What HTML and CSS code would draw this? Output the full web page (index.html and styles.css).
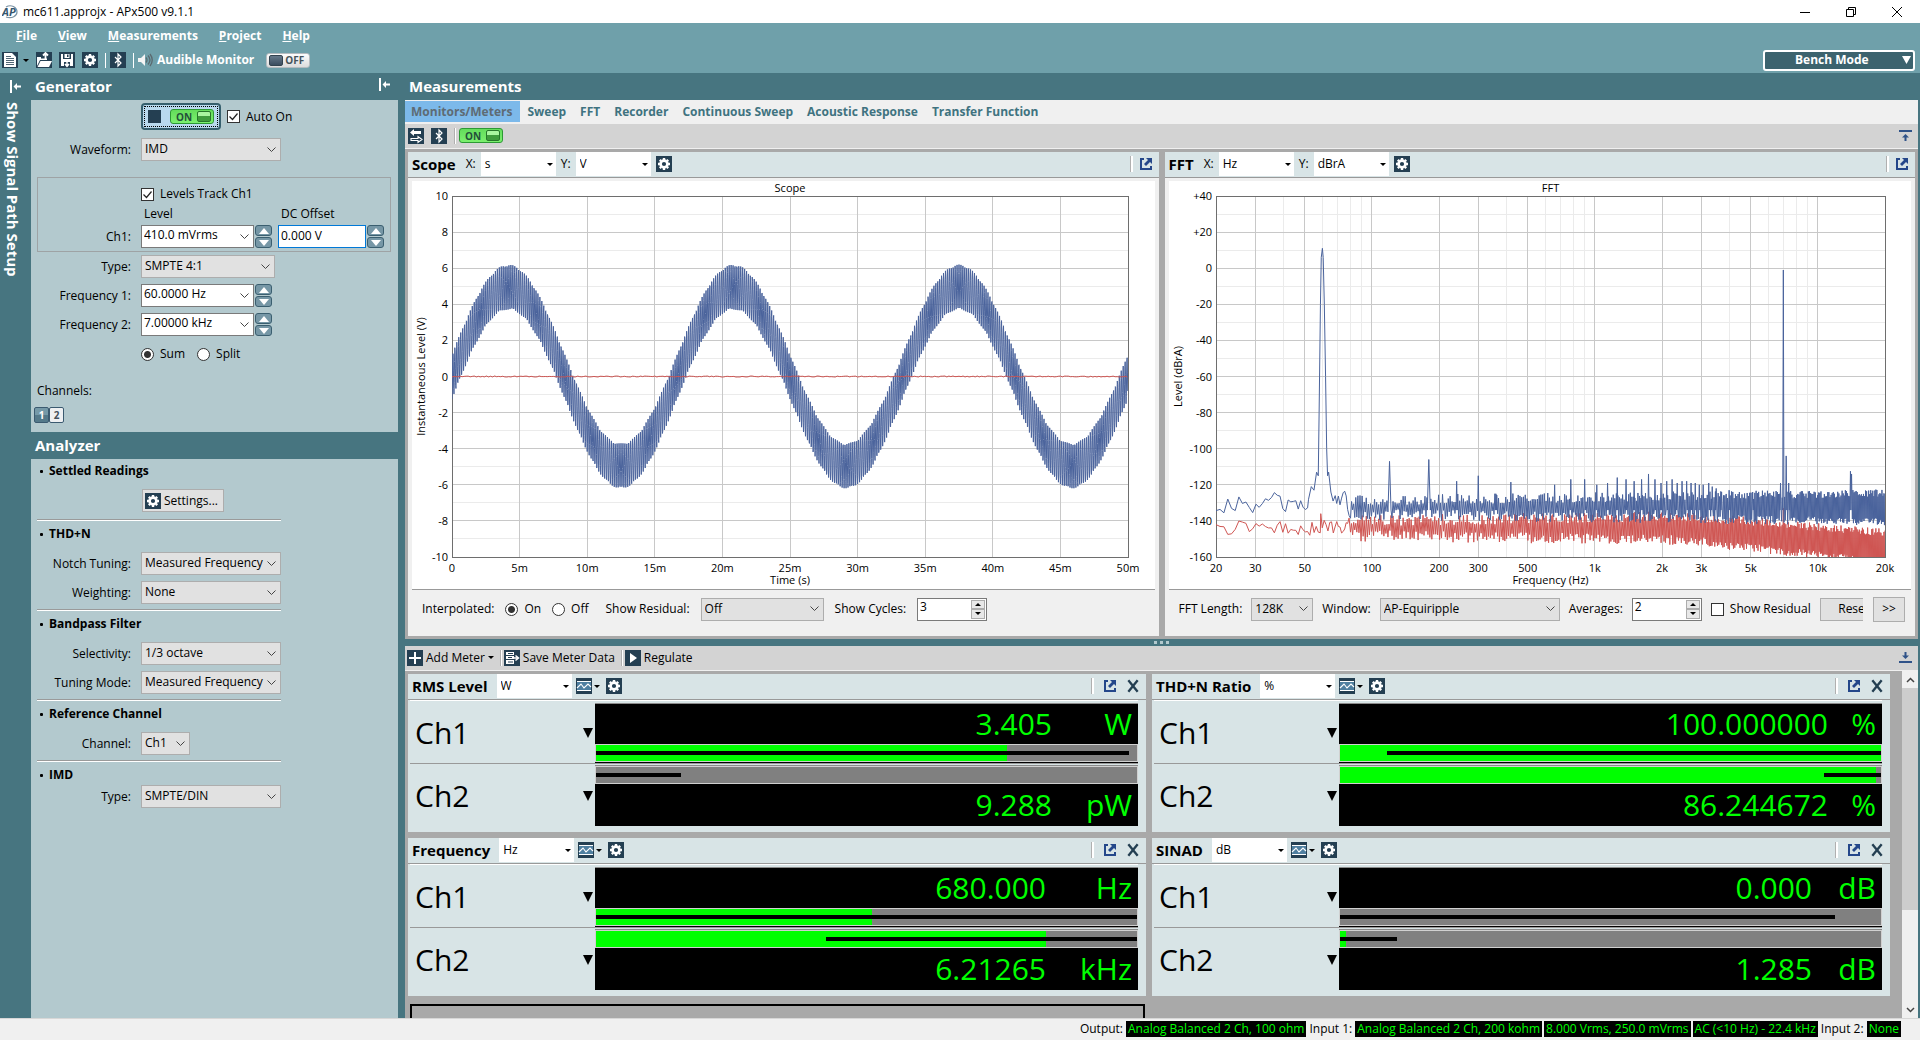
FILE: index.html
```
<!DOCTYPE html>
<html lang="en">
<head>
  <meta charset="UTF-8" />
  <meta name="viewport" content="width=device-width, initial-scale=1" />
  <title>mc611.approjx - APx500 v9.1.1</title>
  <link rel="stylesheet" href="styles.css">
</head>
<body>

<!-- shared icons -->
<svg class="defs" width="0" height="0" aria-hidden="true">
  <symbol id="i-gear" viewBox="0 0 16 16">
    <rect width="16" height="16" fill="#243f52"/>
    <circle cx="8" cy="8" r="3.4" fill="none" stroke="#fff" stroke-width="2.6"/>
    <path d="M8 2v2M8 12v2M2 8h2M12 8h2M3.8 3.8l1.3 1.3M10.9 10.9l1.3 1.3M3.8 12.2l1.3-1.3M10.9 5.1l1.3-1.3" stroke="#fff" stroke-width="2.4"/>
  </symbol>
  <symbol id="i-bt" viewBox="0 0 16 16">
    <rect width="16" height="16" fill="#243f52"/>
    <path d="M5 5l6 6-3 3V2l3 3-6 6" fill="none" stroke="#fff" stroke-width="1.2"/>
  </symbol>
  <symbol id="i-popout" viewBox="0 0 14 14">
    <path d="M5 2H2v10h10V9" fill="none" stroke="#24478a" stroke-width="2"/>
    <path d="M7 1h6v6l-2-2-4 4-2-2 4-4z" fill="#24478a"/>
  </symbol>
  <symbol id="i-close" viewBox="0 0 12 12">
    <path d="M2 1l8 10M10 1L2 11" stroke="#243f52" stroke-width="2"/>
  </symbol>
  <symbol id="i-graph" viewBox="0 0 16 16">
    <rect width="16" height="16" fill="#243f52"/>
    <path d="M1 3.5h14M1 12.5h14" stroke="#fff" stroke-width="1"/>
    <rect x="1" y="4" width="14" height="8" fill="#4f7fa0"/>
    <path d="M1 10l4-4 3 4 4-4 3 3" fill="none" stroke="#fff" stroke-width="1.1"/>
  </symbol>
  <symbol id="i-pin" viewBox="0 0 11 13">
    <path d="M1 0v13" stroke="#fff" stroke-width="2"/>
    <path d="M3.5 6.500L7 3v2.500h4v2H7V10z" fill="#fff"/>
  </symbol>
</svg>

<header class="titlebar">
  <svg width="16" height="16" viewBox="0 0 16 16">
    <path d="M4 3C9 0 15 3 15 8c0 4-5 7-11 5" fill="none" stroke="#7c93a3" stroke-width="1.200"/>
    <text class="logo-text" x="0" y="12">AP</text>
  </svg>
  <span class="window-title">mc611.approjx - APx500 v9.1.1</span>
  <div class="window-buttons">
    <button type="button" aria-label="Minimize"><svg width="10" height="10" viewBox="0 0 10 10"><path d="M0 5.500h10" stroke="#000"/></svg></button>
    <button type="button" aria-label="Restore"><svg width="10" height="10" viewBox="0 0 10 10"><path d="M.5 2.500h7v7h-7zM2.500 2.500v-2h7v7h-2" fill="none" stroke="#000"/></svg></button>
    <button type="button" aria-label="Close"><svg width="10" height="10" viewBox="0 0 10 10"><path d="M0 0l10 10M10 0L0 10" stroke="#000"/></svg></button>
  </div>
</header>

<div class="topbar">
  <nav class="menu">
    <a href="#"><u>F</u>ile</a>
    <a href="#"><u>V</u>iew</a>
    <a href="#"><u>M</u>easurements</a>
    <a href="#"><u>P</u>roject</a>
    <a href="#"><u>H</u>elp</a>
  </nav>
  <div class="toolbar">
    <button type="button" class="icon-btn new-btn" aria-label="New">
      <svg width="16" height="16" viewBox="0 0 16 16"><rect width="16" height="16" fill="#243f52"/><path d="M2 1h8l4 4v10H2z" fill="#fff"/><path d="M4 4.500h5M4 6.500h8M4 8.500h8M4 10.500h8M4 12.500h8" stroke="#243f52" stroke-width=".8"/></svg>
      <span class="caret"></span>
    </button>
    <button type="button" class="icon-btn" aria-label="Open">
      <svg width="16" height="16" viewBox="0 0 16 16"><rect width="16" height="16" fill="#243f52"/><path d="M1 5h4v1.500h6V8H4l-3 6z" fill="#fff"/><path d="M4.500 9H16l-3 6H1.500z" fill="#fff"/><path d="M9.500 8V1M7 3.500L9.500 1 12 3.500" fill="none" stroke="#fff" stroke-width="1.800"/></svg>
    </button>
    <button type="button" class="icon-btn" aria-label="Save">
      <svg width="16" height="16" viewBox="0 0 16 16"><rect width="16" height="16" fill="#243f52"/><path d="M2 2h2v5h8V2h2v12h-3v-4H5v4H2z" fill="#fff"/><path d="M5.500 2h5v4h-5z" fill="#fff"/><path d="M8 2.500h1.500V5H8z" fill="#243f52"/><path d="M8 9v5M6 12l2 2.300 2-2.300" fill="none" stroke="#fff" stroke-width="1.500"/></svg>
    </button>
    <button type="button" class="icon-btn" aria-label="Settings"><svg width="16" height="16"><use href="#i-gear"/></svg></button>
    <span class="sep"></span>
    <button type="button" class="icon-btn" aria-label="Bluetooth"><svg width="16" height="16"><use href="#i-bt"/></svg></button>
    <span class="sep"></span>
    <span class="monitor">
      <svg width="15" height="14" viewBox="0 0 15 14"><path d="M0 5h3l4-4v12L3 9H0z" fill="#f4f4f4"/><path d="M8 4.500q2 2.500 0 5M10 2.500q4 4.500 0 9M12 1q4.500 6 0 12" fill="none" stroke="#5b6a70" stroke-width="1.300"/></svg>
      Audible Monitor
    </span>
    <button type="button" class="toggle off"><i></i>OFF</button>
    <button type="button" class="bench">Bench Mode <svg width="9" height="8" viewBox="0 0 9 8"><path d="M0 0h9L4.500 8z" fill="#fff"/></svg></button>
  </div>
</div>

<main class="workspace">
  <aside class="path-strip">
    <svg width="11" height="13"><use href="#i-pin"/></svg>
    <span>Show Signal Path Setup</span>
  </aside>

  <div class="side">
    <h2 class="bar-title">Generator <svg width="11" height="13"><use href="#i-pin"/></svg></h2>
    <form class="panel generator">
      <div class="row on-row">
        <button type="button" class="on-button"><i class="stop"></i><span class="toggle on">ON<i></i></span></button>
        <label><input type="checkbox" checked> Auto On</label>
      </div>
      <div class="row wave-row">
        <label for="waveform">Waveform:</label>
        <select id="waveform" class="w140"><option>IMD</option></select>
      </div>
      <fieldset class="levels">
        <label class="track"><input type="checkbox" checked> Levels Track Ch1</label>
        <div class="level-heads"><span>Level</span><span>DC Offset</span></div>
        <div class="row">
          <label for="ch1">Ch1:</label>
          <div class="combo"><input id="ch1" type="text" value="410.0 mVrms"><button type="button" aria-label="Choose level"></button></div>
          <div class="spin"><button type="button" aria-label="Up"></button><button type="button" aria-label="Down"></button></div>
          <input class="dc" type="text" value="0.000 V" aria-label="DC Offset">
          <div class="spin"><button type="button" aria-label="Up"></button><button type="button" aria-label="Down"></button></div>
        </div>
      </fieldset>
      <div class="fields">
        <div class="row">
          <label for="gtype">Type:</label>
          <select id="gtype" class="w134"><option>SMPTE 4:1</option></select>
        </div>
        <div class="row">
          <label for="f1">Frequency 1:</label>
          <div class="combo"><input id="f1" type="text" value="60.0000 Hz"><button type="button" aria-label="Choose frequency 1"></button></div>
          <div class="spin"><button type="button" aria-label="Up"></button><button type="button" aria-label="Down"></button></div>
        </div>
        <div class="row">
          <label for="f2">Frequency 2:</label>
          <div class="combo"><input id="f2" type="text" value="7.00000 kHz"><button type="button" aria-label="Choose frequency 2"></button></div>
          <div class="spin"><button type="button" aria-label="Up"></button><button type="button" aria-label="Down"></button></div>
        </div>
      </div>
      <div class="radios">
        <label><input type="radio" name="mode" checked> Sum</label>
        <label><input type="radio" name="mode"> Split</label>
      </div>
      <div class="channels-label">Channels:</div>
      <div class="channels">
        <button type="button" class="active">1</button><button type="button">2</button>
      </div>
    </form>

    <h2 class="bar-title">Analyzer</h2>
    <form class="panel analyzer">
      <section>
        <h3>Settled Readings</h3>
        <button type="button" class="settings"><svg width="16" height="16"><use href="#i-gear"/></svg> Settings...</button>
      </section>
      <section>
        <h3>THD+N</h3>
        <div class="row"><label for="notch">Notch Tuning:</label><select id="notch" class="w140"><option>Measured Frequency</option></select></div>
        <div class="row"><label for="weight">Weighting:</label><select id="weight" class="w140"><option>None</option></select></div>
      </section>
      <section>
        <h3>Bandpass Filter</h3>
        <div class="row"><label for="select">Selectivity:</label><select id="select" class="w140"><option>1/3 octave</option></select></div>
        <div class="row"><label for="tuning">Tuning Mode:</label><select id="tuning" class="w140"><option>Measured Frequency</option></select></div>
      </section>
      <section>
        <h3>Reference Channel</h3>
        <div class="row"><label for="refch">Channel:</label><select id="refch" class="w49"><option>Ch1</option></select></div>
      </section>
      <section class="tight">
        <h3>IMD</h3>
        <div class="row"><label for="imd">Type:</label><select id="imd" class="w140"><option>SMPTE/DIN</option></select></div>
      </section>
    </form>
  </div>

  <div class="content">
    <h2 class="bar-title">Measurements</h2>
    <nav class="tabs">
      <a href="#" class="active">Monitors/Meters</a>
      <a href="#">Sweep</a>
      <a href="#">FFT</a>
      <a href="#">Recorder</a>
      <a href="#">Continuous Sweep</a>
      <a href="#">Acoustic Response</a>
      <a href="#">Transfer Function</a>
    </nav>
    <div class="strip">
      <button type="button" class="icon-btn" aria-label="Swap"><svg width="16" height="16" viewBox="0 0 16 16"><rect width="16" height="16" fill="#243f52"/><path d="M2 4.500L6 1v2h7v3H6v2z" fill="#fff"/><path d="M14 11.500l-4-3v2H3v2h7v2z" fill="none" stroke="#fff" stroke-width="1.100"/></svg></button>
      <button type="button" class="icon-btn" aria-label="Bluetooth"><svg width="16" height="16"><use href="#i-bt"/></svg></button>
      <span class="sep"></span>
      <button type="button" class="toggle on">ON<i></i></button>
      <button type="button" class="icon-btn end" aria-label="Collapse up"><svg width="13" height="12" viewBox="0 0 13 12"><path d="M0 1h13M6.500 11V6" stroke="#2f5288" stroke-width="2"/><path d="M3 7.500L6.500 4 10 7.500z" fill="#2f5288"/></svg></button>
    </div>

    <div class="monitors">
      <section class="monitor-panel">
        <div class="head">
          <h3>Scope</h3>
          <label for="sx">X:</label><select id="sx"><option>s</option></select>
          <label for="sy">Y:</label><select id="sy"><option>V</option></select>
          <button type="button" class="icon-btn" aria-label="Scope settings"><svg width="16" height="16"><use href="#i-gear"/></svg></button>
          <div class="head-end"><button type="button" class="icon-btn" aria-label="Undock"><svg width="14" height="14"><use href="#i-popout"/></svg></button></div>
        </div>
        <div class="chart" id="scope"></div>
        <div class="controls scope-controls">
          <span>Interpolated:</span>
          <label><input type="radio" name="interp" checked> On</label>
          <label><input type="radio" name="interp"> Off</label>
          <label class="resid-label" for="resid">Show Residual:</label><select id="resid" class="w123"><option>Off</option></select>
          <label for="cycles">Show Cycles:</label>
          <div class="number"><input id="cycles" type="text" value="3"><span><button type="button" aria-label="Up"></button><button type="button" aria-label="Down"></button></span></div>
        </div>
      </section>

      <section class="monitor-panel">
        <div class="head">
          <h3>FFT</h3>
          <label for="fx">X:</label><select id="fx"><option>Hz</option></select>
          <label for="fy">Y:</label><select id="fy"><option>dBrA</option></select>
          <button type="button" class="icon-btn" aria-label="FFT settings"><svg width="16" height="16"><use href="#i-gear"/></svg></button>
          <div class="head-end"><button type="button" class="icon-btn" aria-label="Undock"><svg width="14" height="14"><use href="#i-popout"/></svg></button></div>
        </div>
        <div class="chart" id="fft"></div>
        <div class="controls fft-controls">
          <label for="len">FFT Length:</label><select id="len" class="w62"><option>128K</option></select>
          <label for="win">Window:</label><select id="win" class="w180"><option>AP-Equiripple</option></select>
          <label for="avg">Averages:</label>
          <div class="number"><input id="avg" type="text" value="2"><span><button type="button" aria-label="Up"></button><button type="button" aria-label="Down"></button></span></div>
          <label class="residual"><input type="checkbox"> Show Residual</label>
          <div class="clip"><button type="button">Reset</button></div>
          <button type="button" class="more">&gt;&gt;</button>
        </div>
      </section>
    </div>

    <div class="splitter"><i></i><i></i><i></i></div>

    <div class="strip meter-strip">
      <button type="button" class="text-btn"><svg width="16" height="16" viewBox="0 0 16 16"><rect width="16" height="16" fill="#243f52"/><path d="M8 2v12M2 8h12" stroke="#fff" stroke-width="2"/></svg> Add Meter <span class="caret"></span></button>
      <span class="sep"></span>
      <button type="button" class="text-btn"><svg width="16" height="16" viewBox="0 0 16 16"><rect width="16" height="16" fill="#243f52"/><path d="M2 2h8v3H2zM2 6h8v3H2zM2 10h8v4H2z" fill="#fff"/><path d="M4 3.500h5M4 7.500h4M4 12h5" stroke="#243f52"/><path d="M8 8h6M11.500 5.500L14.500 8l-3 2.500" fill="none" stroke="#fff" stroke-width="1.500"/></svg> Save Meter Data</button>
      <span class="sep"></span>
      <button type="button" class="text-btn"><svg width="16" height="16" viewBox="0 0 16 16"><rect width="16" height="16" fill="#243f52"/><path d="M5 3l7 5-7 5z" fill="#fff"/></svg> Regulate</button>
      <button type="button" class="icon-btn end" aria-label="Collapse down"><svg width="13" height="12" viewBox="0 0 13 12"><path d="M0 10h13M6.500 0v4" stroke="#2f5288" stroke-width="2"/><path d="M3 3.500L6.500 7 10 3.500z" fill="#2f5288"/></svg></button>
    </div>

    <div class="meter-area">
      <div class="meters">
        <section class="meter power">
          <div class="head">
            <h3>RMS Level</h3>
            <select aria-label="RMS Level unit"><option>W</option></select>
            <button type="button" class="icon-btn graph-btn" aria-label="Graph"><svg width="16" height="16"><use href="#i-graph"/></svg><span class="caret"></span></button>
            <button type="button" class="icon-btn" aria-label="Settings"><svg width="16" height="16"><use href="#i-gear"/></svg></button>
            <div class="head-end"><button type="button" class="icon-btn" aria-label="Undock"><svg width="14" height="14"><use href="#i-popout"/></svg></button><button type="button" class="icon-btn" aria-label="Close"><svg width="14" height="14"><use href="#i-close"/></svg></button></div>
          </div>
          <div class="channel">
            <div class="name">Ch1 <i></i></div>
            <div class="display">
              <div class="readout"><span>3.405</span><span class="unit">W</span></div>
              <div class="level"><b style="width:76%"></b><s style="left:0;width:98.6%"></s></div>
            </div>
          </div>
          <div class="channel second">
            <div class="name">Ch2 <i></i></div>
            <div class="display">
              <div class="level"><b style="width:0"></b><s style="left:0;width:15.7%"></s></div>
              <div class="readout"><span>9.288</span><span class="unit">pW</span></div>
            </div>
          </div>
        </section>

        <section class="meter ratio">
          <div class="head">
            <h3>THD+N Ratio</h3>
            <select aria-label="THD+N Ratio unit"><option>%</option></select>
            <button type="button" class="icon-btn graph-btn" aria-label="Graph"><svg width="16" height="16"><use href="#i-graph"/></svg><span class="caret"></span></button>
            <button type="button" class="icon-btn" aria-label="Settings"><svg width="16" height="16"><use href="#i-gear"/></svg></button>
            <div class="head-end"><button type="button" class="icon-btn" aria-label="Undock"><svg width="14" height="14"><use href="#i-popout"/></svg></button><button type="button" class="icon-btn" aria-label="Close"><svg width="14" height="14"><use href="#i-close"/></svg></button></div>
          </div>
          <div class="channel">
            <div class="name">Ch1 <i></i></div>
            <div class="display">
              <div class="readout"><span>100.000000</span><span class="unit">%</span></div>
              <div class="level"><b style="width:100%"></b><s style="left:8.6%;width:91.4%"></s></div>
            </div>
          </div>
          <div class="channel second">
            <div class="name">Ch2 <i></i></div>
            <div class="display">
              <div class="level"><b style="width:99%"></b><s style="left:89.5%;width:10.5%"></s></div>
              <div class="readout"><span>86.244672</span><span class="unit">%</span></div>
            </div>
          </div>
        </section>

        <section class="meter freq">
          <div class="head">
            <h3>Frequency</h3>
            <select aria-label="Frequency unit"><option>Hz</option></select>
            <button type="button" class="icon-btn graph-btn" aria-label="Graph"><svg width="16" height="16"><use href="#i-graph"/></svg><span class="caret"></span></button>
            <button type="button" class="icon-btn" aria-label="Settings"><svg width="16" height="16"><use href="#i-gear"/></svg></button>
            <div class="head-end"><button type="button" class="icon-btn" aria-label="Undock"><svg width="14" height="14"><use href="#i-popout"/></svg></button><button type="button" class="icon-btn" aria-label="Close"><svg width="14" height="14"><use href="#i-close"/></svg></button></div>
          </div>
          <div class="channel">
            <div class="name">Ch1 <i></i></div>
            <div class="display">
              <div class="readout"><span>680.000</span><span class="unit">Hz</span></div>
              <div class="level"><b style="width:51%"></b><s style="left:0;width:100%"></s></div>
            </div>
          </div>
          <div class="channel second">
            <div class="name">Ch2 <i></i></div>
            <div class="display">
              <div class="level"><b style="width:83.2%"></b><s style="left:42.6%;width:57.4%"></s></div>
              <div class="readout"><span>6.21265</span><span class="unit">kHz</span></div>
            </div>
          </div>
        </section>

        <section class="meter sinad">
          <div class="head">
            <h3>SINAD</h3>
            <select aria-label="SINAD unit"><option>dB</option></select>
            <button type="button" class="icon-btn graph-btn" aria-label="Graph"><svg width="16" height="16"><use href="#i-graph"/></svg><span class="caret"></span></button>
            <button type="button" class="icon-btn" aria-label="Settings"><svg width="16" height="16"><use href="#i-gear"/></svg></button>
            <div class="head-end"><button type="button" class="icon-btn" aria-label="Undock"><svg width="14" height="14"><use href="#i-popout"/></svg></button><button type="button" class="icon-btn" aria-label="Close"><svg width="14" height="14"><use href="#i-close"/></svg></button></div>
          </div>
          <div class="channel">
            <div class="name">Ch1 <i></i></div>
            <div class="display">
              <div class="readout"><span>0.000</span><span class="unit">dB</span></div>
              <div class="level"><b style="width:0"></b><s style="left:0;width:91.5%"></s></div>
            </div>
          </div>
          <div class="channel second">
            <div class="name">Ch2 <i></i></div>
            <div class="display">
              <div class="level"><b style="width:1.1%"></b><s style="left:0;width:10.6%"></s></div>
              <div class="readout"><span>1.285</span><span class="unit">dB</span></div>
            </div>
          </div>
        </section>

        <div class="empty-slot"></div>
      </div>
      <div class="scrollbar">
        <button type="button" aria-label="Scroll up"><svg width="9" height="6" viewBox="0 0 9 6"><path d="M1 5l3.500-3.500L8 5" fill="none" stroke="#444" stroke-width="1.500"/></svg></button>
        <div class="track-area"><div class="thumb"></div></div>
        <button type="button" aria-label="Scroll down"><svg width="9" height="6" viewBox="0 0 9 6"><path d="M1 1l3.500 3.500L8 1" fill="none" stroke="#444" stroke-width="1.500"/></svg></button>
      </div>
    </div>
  </div>
</main>

<footer class="status">
  <span>Output:</span><b>Analog Balanced 2 Ch, 100 ohm</b>
  <span>Input 1:</span><b>Analog Balanced 2 Ch, 200 kohm</b><b>8.000 Vrms, 250.0 mVrms</b><b>AC (&lt;10 Hz) - 22.4 kHz</b>
  <span>Input 2:</span><b>None</b>
</footer>

<script src="script.js"></script>
</body>
</html>
```
FILE: styles.css
```
* {
  box-sizing: border-box;
}
body {
  margin: 0;
  height: 100vh;
  display: flex;
  flex-direction: column;
  overflow: hidden;
  font-family: "Open Sans", "Noto Sans", sans-serif;
  font-size: 12px;
  line-height: 16px;
  color: #000;
  background: #477580;
}
h2, h3, form, fieldset {
  margin: 0;
  padding: 0;
}
button, input, select {
  font: inherit;
  color: inherit;
  margin: 0;
}
button {
  padding: 0;
  border: none;
  background: none;
}
svg {
  display: block;
  flex: none;
}
.defs {
  position: absolute;
}
label {
  white-space: nowrap;
}

/* check boxes and radios */
input[type="checkbox"],
input[type="radio"] {
  appearance: none;
  width: 13px;
  height: 13px;
  flex: none;
  border: 1px solid #333;
  background: #fff;
}
input[type="radio"] {
  border-radius: 50%;
}
input[type="radio"]:checked {
  background: radial-gradient(circle, #333 0 3px, #fff 4px);
}
input[type="checkbox"]:checked {
  background: #fff url("data:image/svg+xml,%3Csvg xmlns='http://www.w3.org/2000/svg' viewBox='0 0 11 11'%3E%3Cpath d='M1.500 5.500l3 3 5-6' fill='none' stroke='%23222' stroke-width='1.200'/%3E%3C/svg%3E") center / 11px no-repeat;
}

/* drop-downs */
select {
  appearance: none;
  flex: none;
  height: 23px;
  padding: 0 20px 1px 3px;
  border: 1px solid #adadad;
  border-radius: 0;
  background: #e1e1e1 url("data:image/svg+xml,%3Csvg xmlns='http://www.w3.org/2000/svg' viewBox='0 0 9 6'%3E%3Cpath d='M.5 .5l4 4 4-4' fill='none' stroke='%23444'/%3E%3C/svg%3E") right 4px center / 9px 6px no-repeat;
}
.w49 { width: 49px; }
.w62 { width: 62px; }
.w123 { width: 123px; }
.w134 { width: 134px; }
.w140 { width: 140px; }
.w180 { width: 180px; }
.w49, .w62, .w140 {
  padding-right: 0;
}

.caret {
  border: 3px solid transparent;
  border-top-color: #000;
  border-bottom: none;
}
.icon-btn {
  display: flex;
  align-items: center;
  gap: 2px;
}
.sep {
  width: 2px;
  height: 15px;
  background: #fff;
}

/* title bar */
.titlebar {
  height: 23px;
  flex: none;
  display: flex;
  align-items: center;
  gap: 5px;
  padding-left: 2px;
  background: #fff;
}
.logo-text {
  font-size: 11px;
  font-style: italic;
  font-weight: bold;
  fill: #35566e;
}
.window-buttons {
  margin-left: auto;
  display: flex;
}
.window-buttons button {
  width: 46px;
  height: 20px;
  display: flex;
  align-items: center;
  justify-content: center;
}

/* menu and toolbar */
.topbar {
  height: 50px;
  flex: none;
  background: #6fa0aa;
  color: #fff;
  font-weight: bold;
}
.menu {
  display: flex;
  gap: 21px;
  padding: 5px 16px 0;
}
.menu a {
  color: #fff;
  text-decoration: none;
}
.toolbar {
  display: flex;
  align-items: center;
  gap: 7px;
  height: 20px;
  margin-top: 6px;
  padding-left: 2px;
}
.new-btn {
  gap: 5px;
}
.toolbar .sep {
  width: 1px;
}
.toolbar .sep + * {
  margin-left: -3px;
}
.monitor {
  display: flex;
  align-items: center;
  gap: 4px;
  margin-right: 5px;
}
.toggle {
  display: inline-flex;
  align-items: center;
  justify-content: space-between;
  height: 15px;
  width: 44px;
  padding: 1px 5px 1px 2px;
  border-radius: 3px;
  font-size: 10px;
  line-height: 12px;
  font-weight: bold;
  color: #45535b;
  background: linear-gradient(#fdfdfd, #dcdcdc);
  border: 1px solid #b5bcc0;
}
.toggle i {
  width: 14px;
  height: 11px;
  border-radius: 2px;
  background: linear-gradient(#66798a, #3b4d5f);
  border: 1px solid #33434f;
}
.toggle.on {
  padding: 1px 2px 1px 5px;
  background: linear-gradient(#63dc5b, #7cf06f);
  border-color: #2c9a34;
  color: #24503a;
}
.toggle.on i {
  background: linear-gradient(#a9f59f 45%, #3f9c3d 50%);
  border-color: #27762b;
}
.bench {
  margin-left: auto;
  margin-right: 5px;
  width: 152px;
  height: 21px;
  display: flex;
  align-items: center;
  justify-content: space-between;
  padding: 0 2px 0 30px;
  border: 2px solid #fff;
  border-radius: 3px;
  background: #3c636e;
}

/* workspace */
.workspace {
  flex: 1;
  min-height: 0;
  display: flex;
}
.path-strip {
  width: 31px;
  flex: none;
  display: flex;
  flex-direction: column;
  align-items: center;
  gap: 9px;
  padding: 7px 5px 0 0;
  color: #fff;
  font-size: 15px;
  font-weight: bold;
}
.path-strip svg {
  margin-left: 5px;
}
.path-strip span {
  writing-mode: vertical-rl;
}
.bar-title {
  height: 27px;
  flex: none;
  display: flex;
  align-items: center;
  justify-content: space-between;
  padding: 0 8px 2px 4px;
  color: #fff;
  font-size: 15px;
}
.bar-title svg {
  align-self: flex-start;
  margin-top: 5px;
}
.side {
  width: 367px;
  flex: none;
  display: flex;
  flex-direction: column;
}
.panel {
  background: #b3c9ce;
}

/* forms in the side panel */
.row {
  display: flex;
  align-items: center;
  height: 23px;
}
.row > label:first-child {
  width: 94px;
  margin-right: 10px;
  text-align: right;
}
.generator {
  padding: 3px 8px 9px 6px;
}
.row.on-row {
  height: 27px;
  padding-left: 104px;
}
.on-row label,
.track,
.radios label,
.controls label {
  display: flex;
  align-items: center;
  gap: 6px;
}
.row.on-row > label {
  margin-left: 6px;
}
.on-button {
  display: flex;
  align-items: center;
  justify-content: space-between;
  width: 80px;
  height: 27px;
  padding: 0 5px;
  border: 2px solid #365f6d;
  border-radius: 4px;
  background: #b9d9ee;
  outline: 1px dotted #000;
  outline-offset: -4px;
}
.stop {
  width: 13px;
  height: 13px;
  background: #243f52;
}
.wave-row {
  margin-top: 8px;
}
.levels {
  margin-top: 16px;
  height: 75px;
  border: 1px solid #9ea3a5;
  padding-top: 8px;
}
.levels .row > label:first-child {
  width: 93px;
}
.track {
  height: 16px;
  padding-left: 103px;
}
.level-heads {
  display: flex;
  padding: 4px 0 3px 106px;
}
.level-heads span:first-child {
  width: 137px;
}
.combo {
  display: flex;
  width: 113px;
  height: 23px;
  border: 1px solid #7a7a7a;
  background: #fff;
}
.combo input {
  flex: 1;
  min-width: 0;
  padding: 0 2px 3px;
  border: none;
  background: none;
}
.combo button {
  width: 17px;
  background: url("data:image/svg+xml,%3Csvg xmlns='http://www.w3.org/2000/svg' viewBox='0 0 9 6'%3E%3Cpath d='M.5 .5l4 4 4-4' fill='none' stroke='%23444'/%3E%3C/svg%3E") center / 9px 6px no-repeat;
}
.spin {
  display: flex;
  flex-direction: column;
  gap: 1px;
  margin: 0 6px 0 1px;
}
.spin button {
  width: 17px;
  height: 11px;
  display: flex;
  align-items: center;
  justify-content: center;
  border: 1px solid #3b5f70;
  border-radius: 3px;
  background: #7697a6;
}
.spin button::before {
  content: "";
  border: 5px solid transparent;
  border-bottom: 6px solid #fff;
  border-top: none;
}
.spin button:last-child::before {
  border-bottom: none;
  border-top: 6px solid #fff;
}
.dc {
  width: 88px;
  height: 23px;
  padding: 0 2px 3px;
  border: 1px solid #0078d7;
  background: #fff;
}
.fields {
  display: flex;
  flex-direction: column;
  gap: 6px;
  margin-top: 3px;
}
.radios {
  display: flex;
  gap: 12px;
  margin-top: 10px;
  padding-left: 104px;
}
.channels-label {
  margin-top: 21px;
}
.channels {
  display: flex;
  margin: 8px 0 0 -3px;
}
.channels button {
  width: 15px;
  height: 16px;
  border: 1px solid #3b5a70;
  border-radius: 2px;
  background: #eef0f2;
  color: #44515c;
  font-size: 10px;
  line-height: 12px;
  font-weight: bold;
}
.channels .active {
  background: linear-gradient(#7599a8 50%, #54798a 50%);
  color: #fff;
}
.analyzer {
  flex: 1;
  padding-left: 6px;
}
.analyzer section {
  width: 244px;
  padding: 5px 0;
  border-top: 1px solid #9a9a9a;
  box-shadow: inset 0 1px #fff;
  display: flex;
  flex-direction: column;
  gap: 6px;
}
.analyzer section:first-child {
  padding: 3px 0 7px;
  border-top: none;
  box-shadow: none;
}
.analyzer h3 {
  height: 18px;
  margin-bottom: 3px;
  padding-left: 3px;
  font-size: 12px;
  line-height: 18px;
}
.analyzer h3::before {
  content: "";
  display: inline-block;
  width: 3px;
  height: 3px;
  margin: 0 6px 2px 0;
  border-radius: 1px;
  background: #000;
}
.analyzer .tight {
  gap: 0;
}
.tight h3 {
  margin-bottom: 1px;
}
.settings {
  display: flex;
  align-items: center;
  gap: 3px;
  width: 82px;
  height: 23px;
  margin-left: 105px;
  padding-left: 2px;
  border: 1px solid #adadad;
  background: #e1e1e1;
}

/* measurements */
.content {
  flex: 1;
  min-width: 0;
  margin: 0 2px 0 7px;
  display: flex;
  flex-direction: column;
}
.tabs {
  height: 24px;
  flex: none;
  display: flex;
  padding-top: 1px;
  background: #f0f0f0;
  font-weight: bold;
}
.tabs a {
  height: 21px;
  padding: 0 7px;
  line-height: 22px;
  color: #3f7380;
  text-decoration: none;
}
.tabs a:first-child {
  padding: 0 8px 0 6px;
}
.tabs .active {
  background: #7cb9ea;
  color: #5e6b74;
}
.strip {
  height: 25px;
  flex: none;
  display: flex;
  align-items: center;
  gap: 7px;
  padding: 0 6px 1px 3px;
  background: #d3d3d3;
  border-bottom: 1px solid #f0f0f0;
}
.strip .sep,
.head-end::before {
  width: 2px;
  height: 16px;
  background: #fff;
  border-left: 1px solid #b0b0b0;
}
.strip .toggle {
  margin-left: -4px;
}
.strip .end {
  margin-left: auto;
}
.monitors {
  flex: none;
  display: grid;
  grid-template-columns: 1fr 1fr;
  gap: 6px;
  height: 490px;
  padding: 3px;
  background: #a9a9a9;
}
.monitor-panel {
  display: flex;
  flex-direction: column;
  min-width: 0;
  background: #f0f0f0;
}
.head {
  height: 26px;
  flex: none;
  display: flex;
  align-items: center;
  gap: 4px;
  padding: 0 6px 1px 4px;
  background: #d8e4e6;
  border-bottom: 1px solid #999;
}
.head h3 {
  font-size: 15px;
  margin-right: 5px;
  white-space: nowrap;
}
.head select {
  width: 75px;
  height: 24px;
  padding-bottom: 0;
  border: 1px solid #fff;
  background: #fff url("data:image/svg+xml,%3Csvg xmlns='http://www.w3.org/2000/svg' viewBox='0 0 6 3'%3E%3Cpath d='M0 0h6L3 3z'/%3E%3C/svg%3E") right 2px center / 6px 3px no-repeat;
}
.monitor-panel .head {
  gap: 5px;
}
.head-end {
  margin-left: auto;
  display: flex;
  align-items: center;
  gap: 6px;
}
.head-end::before {
  content: "";
}
.chart {
  flex: 1;
  min-height: 0;
  margin: 3px 4px 0;
  background: #fff;
  border-bottom: 1px solid #999;
}
.chart text {
  font-size: 11px;
}
.controls {
  height: 46px;
  flex: none;
  display: flex;
  align-items: center;
  padding: 0 8px 8px 14px;
}
.scope-controls {
  gap: 11px;
}
.resid-label {
  margin-left: 6px;
}
.fft-controls {
  gap: 9px;
  padding-right: 10px;
}
.number {
  display: flex;
  flex: none;
  width: 70px;
  height: 23px;
  border: 1px solid #7a7a7a;
  background: #fff;
}
.number input {
  flex: 1;
  min-width: 0;
  padding: 0 2px 4px;
  border: none;
  background: none;
}
.number span {
  display: flex;
  flex-direction: column;
  padding: 1px;
}
.number button {
  width: 14px;
  flex: 1;
  display: flex;
  align-items: center;
  justify-content: center;
  border: 1px solid #adadad;
  background: #e8e8e8;
}
.number button::before {
  content: "";
  border: 3px solid transparent;
  border-bottom-color: #000;
  border-top: none;
}
.number button:last-child::before {
  border-top: 3px solid #000;
  border-bottom: none;
}
.clip {
  flex: 0 1 43px;
  min-width: 0;
  overflow: hidden;
}
.clip button {
  width: 68px;
  height: 23px;
  border: 1px solid #adadad;
  background: #e1e1e1;
}
.more {
  width: 32px;
  height: 25px;
  flex: none;
  margin-left: auto;
  border: 1px solid #adadad;
  background: #e1e1e1;
}
.splitter {
  height: 7px;
  flex: none;
  display: flex;
  align-items: center;
  justify-content: center;
  gap: 3px;
}
.splitter i {
  width: 3px;
  height: 3px;
  background: #b3c9ce;
}

/* meters */
.text-btn {
  display: flex;
  align-items: center;
  gap: 3px;
}
.meter-strip {
  gap: 6px;
  padding-left: 2px;
}
.meter-strip .sep + * {
  margin-left: -4px;
}
.meter-area {
  flex: 1;
  min-height: 0;
  display: flex;
  overflow: hidden;
  background: #a9a9a9;
}
.meters {
  flex: 1;
  display: grid;
  grid-template-columns: 1fr 1fr;
  grid-auto-rows: 158px;
  gap: 6px;
  padding: 3px 12px 0 3px;
}
.meter {
  background: #d8e4e6;
}
.meter .head {
  padding-right: 6px;
}
.meter .head-end {
  gap: 9px;
}
.graph-btn {
  margin-right: 2px;
}
.channel {
  display: flex;
  height: 63px;
  margin: 0 8px 0 2px;
}
.channel .display {
  flex: 1;
  padding-bottom: 1px;
}
.head + .channel {
  padding-top: 2px;
  border-top: 1px solid #fff;
}
.channel.second {
  border-top: 1px solid #999;
  padding-top: 1px;
}
.name {
  width: 185px;
  display: flex;
  align-items: center;
  justify-content: space-between;
  padding: 0 2px 0 5px;
  font-size: 30px;
  line-height: 40px;
}
.name i {
  border: 5px solid transparent;
  border-top: 10px solid #000;
  border-bottom: none;
}
.display {
  display: flex;
  flex-direction: column;
  background: #000;
  border-top: 1px solid #8a8a8a;
}
.readout {
  flex: 1;
  display: flex;
  align-items: center;
  justify-content: flex-end;
  padding-right: 6px;
  color: #00ff00;
  font-size: 30px;
  line-height: 40px;
}
.unit {
  text-align: right;
}
.power .unit { width: 80px; }
.freq .unit { width: 86px; }
.ratio .unit { width: 48px; }
.sinad .unit { width: 64px; }
.level {
  position: relative;
  height: 18px;
  border: 1px solid #d0d0d0;
  background: #808080;
}
.level b {
  display: block;
  height: 100%;
  background: #00ff00;
}
.level s {
  position: absolute;
  top: 6px;
  height: 4px;
  background: #000;
}
.empty-slot {
  margin: 2px 1px 0 2px;
  border: 2px solid #000;
}
.scrollbar {
  width: 16px;
  flex: none;
  display: flex;
  flex-direction: column;
  background: #f0f0f0;
}
.scrollbar button {
  height: 17px;
  display: flex;
  align-items: center;
  justify-content: center;
}
.track-area {
  flex: 1;
}
.thumb {
  height: 71%;
  background: #cdcdcd;
}

/* status bar */
.status {
  height: 22px;
  flex: none;
  display: flex;
  align-items: center;
  justify-content: flex-end;
  gap: 2px;
  padding: 0 19px 2px 0;
  background: #f0f0f0;
  border-top: 1px solid #d7d7d7;
  white-space: nowrap;
}
.status span {
  margin: 0 1px;
}
.status b {
  padding: 0 2px;
  font-weight: normal;
  color: #00ff00;
  background: #000;
}
```
FILE: script.js
```
const BLUE = "#4a639c";
const RED = "#cf5552";

// repeatable noise so the traces look the same on each load
let seed = 7;
function rand() {
  seed = (seed * 48271) % 2147483647;
  return seed / 2147483647;
}

function line(x1, y1, x2, y2, color) {
  return `<path d="M${x1} ${y1}L${x2} ${y2}" stroke="${color}" shape-rendering="crispEdges"/>`;
}
function text(x, y, value, anchor) {
  return `<text x="${x}" y="${y}" text-anchor="${anchor}">${value}</text>`;
}
function trace(points, color) {
  return `<polyline points="${points.map(p => p[0].toFixed(2) + "," + p[1].toFixed(2)).join(" ")}" fill="none" stroke="${color}" clip-path="url(#clip)"/>`;
}

function draw(id, o) {
  const box = document.getElementById(id);
  const W = box.clientWidth, H = box.clientHeight;
  const L = o.left, R = W - 27, T = 15, B = H - 32;
  const X = v => L + o.xpos(v) * (R - L);
  const Y = v => T + (o.ymax - v) / (o.ymax - o.ymin) * (B - T);
  let s = "";

  o.xminor.forEach(v => s += line(X(v), T, X(v), B, "#ebebeb"));
  for (let v = o.ymin + o.ystep / 2; v < o.ymax; v += o.ystep) s += line(L, Y(v), R, Y(v), "#ebebeb");
  o.xticks.forEach(t => {
    s += line(X(t[0]), T, X(t[0]), B, "#c8c8c8");
    s += text(X(t[0]), B + 15, t[1], "middle");
  });
  for (let v = o.ymin; v <= o.ymax; v += o.ystep) {
    s += line(L, Y(v), R, Y(v), "#c8c8c8");
    s += text(L - 4, Y(v) + 4, (o.plus && v > 0 ? "+" : "") + v, "end");
  }
  s += `<rect x="${L}" y="${T}" width="${R - L}" height="${B - T}" fill="none" stroke="#6e6e6e" shape-rendering="crispEdges"/>`;
  s += text((L + R) / 2, 11, o.title, "middle");
  s += text((L + R) / 2, B + 27, o.xlabel, "middle");
  s += `<text transform="translate(13 ${(T + B) / 2}) rotate(-90)" text-anchor="middle">${o.ylabel}</text>`;
  s += o.traces(X, Y, L, R);
  box.innerHTML = `<svg width="${W}" height="${H}"><clipPath id="clip-${id}"><rect x="${L}" y="${T}" width="${R - L}" height="${B - T}"/></clipPath>${s.replace(/#clip\)/g, "#clip-" + id + ")")}</svg>`;
}

function drawScope() {
  const ticks = [];
  for (let v = 0; v <= 50; v += 5) ticks.push([v, v ? v + "m" : "0"]);
  draw("scope", {
    title: "Scope", xlabel: "Time (s)", ylabel: "Instantaneous Level (V)",
    left: 40, ymin: -10, ymax: 10, ystep: 2,
    xpos: v => v / 50, xticks: ticks, xminor: [],
    traces: (X, Y) => {
      const blue = [], red = [];
      // 60 Hz + 7 kHz, 4:1, sampled at 48 kHz
      for (let t = 0; t <= 50; t += 1 / 48) {
        blue.push([X(t), Y(4.95 * Math.sin(2 * Math.PI * 0.06 * t) - 1.25 * Math.cos(2 * Math.PI * 7 * t))]);
      }
      for (let t = 0; t <= 50; t += 0.15) red.push([X(t), Y((rand() - 0.5) * 0.06)]);
      return trace(blue, BLUE) + trace(red, RED);
    }
  });
}

function drawFft() {
  const minor = [40, 60, 70, 80, 90, 400, 600, 700, 800, 900, 4000, 6000, 7000, 8000, 9000];
  const ticks = [20, 30, 50, 100, 200, 300, 500, 1000, 2000, 3000, 5000, 10000, 20000]
    .map(f => [f, f < 1000 ? f : f / 1000 + "k"]);
  const spikes = [[120, -107], [180, -106], [240, -118], [300, -115], [360, -125], [420, -118.5], [660, -120],
    [780, -117], [900, -117], [1020, -120], [1140, -119], [1260, -116], [1380, -117], [1500, -118], [1620, -117],
    [1740, -114], [1860, -117], [1980, -119], [2100, -118], [2220, -117], [2340, -119], [2460, -118], [2580, -118],
    [2700, -119], [2820, -119], [2940, -120], [3060, -120], [3240, -119], [3360, -121], [3500, -122], [3700, -124],
    [4000, -123], [5100, -124], [6800, -119], [7000, -1], [7210, -104], [7400, -119], [14000, -112.5], [14160, -114]];
  draw("fft", {
    title: "FFT", xlabel: "Frequency (Hz)", ylabel: "Level (dBrA)", plus: true,
    left: 47, ymin: -160, ymax: 40, ystep: 20,
    xpos: f => Math.log10(f / 20) / 3, xticks: ticks, xminor: minor,
    traces: (X, Y, L, R) => {
      const blue = [], red = [];
      let side = 1, b = 0, r = 0;
      for (let x = L; x <= R;) {
        const p = (x - L) / (R - L);
        if (p < 0.2) {
          // few bins per pixel: a slow wander
          b = b * 0.4 + (rand() - 0.5) * 11;
          r = r * 0.4 + (rand() - 0.5) * 9;
          blue.push([x, -130.5 + b]);
          red.push([x, -143.5 + r]);
          x += 4 - p * 13;
        } else {
          // noise opens up to the right as bins crowd together
          side = -side;
          const least = p * 0.6;
          blue.push([x, -132.5 + side * (6 + p * 4) * (least + (1 - least) * rand())]);
          const mid = p < 0.7 ? -144 : -144 - (p - 0.7) * 36;
          red.push([x, mid + side * (6.5 + p * 4) * (least + (1 - least) * rand())]);
          x += 1.2 - p * 0.7;
        }
      }
      let pts = blue.filter(q => q[0] < X(52) || q[0] > X(69)).map(q => [q[0], Y(q[1])]);
      const main = [[52, -128], [53.5, -121], [55, -123], [56.5, -113], [57.5, -115], [58, -80], [58.8, -20], [59.3, 6],
        [60, 11], [60.5, 6], [61.2, -20], [62, -60], [62.7, -100], [63.3, -115], [64, -113], [65.5, -124], [67, -129], [68.5, -126]];
      main.forEach(q => pts.push([X(q[0]), Y(q[1])]));
      spikes.forEach(q => {
        const w = q[0] < 200 ? 1.5 : 0.6;
        pts = pts.filter(a => Math.abs(a[0] - X(q[0])) > w);
        pts.push([X(q[0]) - w, Y(-134)], [X(q[0]), Y(q[1])], [X(q[0]) + w, Y(-134)]);
      });
      pts.sort((a, c) => a[0] - c[0]);
      const redPts = red.map(q => [q[0], Y(q[1])]);
      redPts.push([X(59), Y(-136)], [X(7000), Y(-133)]);
      redPts.sort((a, c) => a[0] - c[0]);
      return trace(redPts, RED) + trace(pts, BLUE);
    }
  });
}

function drawAll() {
  seed = 7;
  drawScope();
  drawFft();
}
drawAll();
window.addEventListener("resize", drawAll);
```
